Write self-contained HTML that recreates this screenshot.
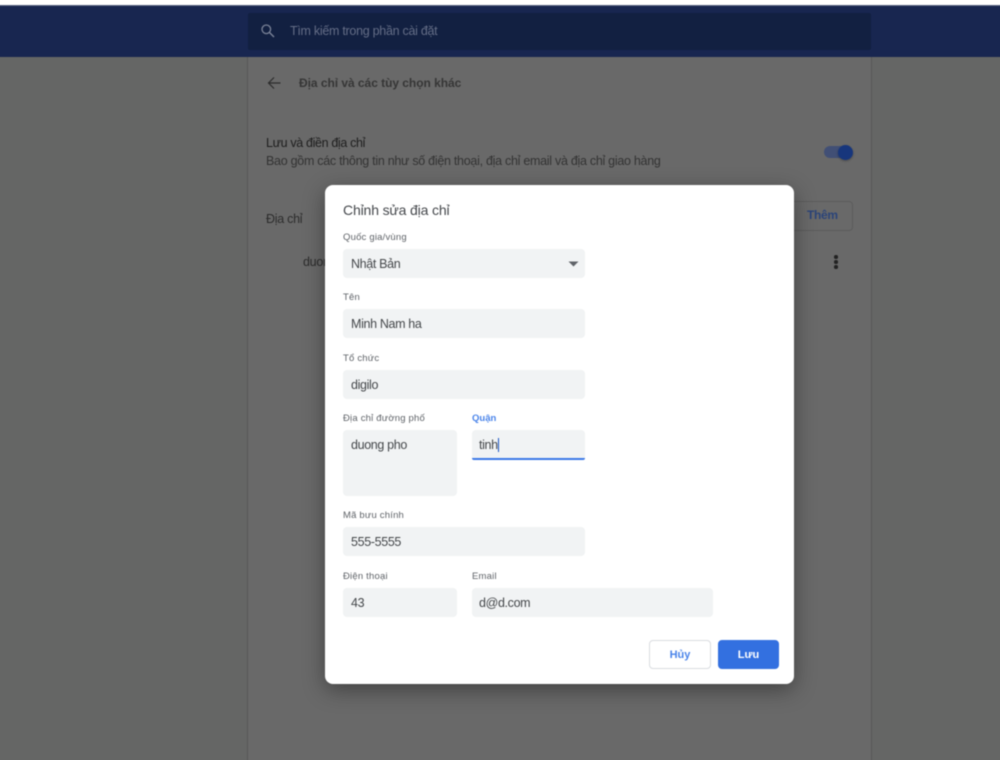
<!DOCTYPE html>
<html lang="vi">
<head>
<meta charset="utf-8">
<title>Chỉnh sửa địa chỉ</title>
<style>
html,body{margin:0;padding:0;width:1000px;height:760px;overflow:hidden;background:#fff;}
*{box-sizing:border-box;}
body{font-family:"Liberation Sans","Noto Sans CJK SC",sans-serif;position:relative;}
#wrap{position:absolute;left:0;top:0;width:1000px;height:760px;filter:blur(0.45px);}
.a{position:absolute;white-space:nowrap;}
.bg{background:#656665;left:-20px;top:57px;width:1040px;height:730px;}
.col{left:247px;top:57px;width:625px;height:730px;background:#696969;border-left:1px solid #565656;border-right:1px solid #565656;}
.hdr{left:-20px;top:5px;width:1040px;height:52px;background:#182650;border-top:1px solid #5a6480;}
.search{left:248px;top:13px;width:623px;height:37px;background:#122041;border-radius:2px;}
.t{font-size:12.5px;line-height:16px;letter-spacing:-.28px;}
.dlg{left:325px;top:185px;width:469px;height:499px;background:#fff;border-radius:8px;box-shadow:0 6px 22px rgba(0,0,0,.38);}
.lb{font-size:9.5px;line-height:12px;color:#5f6368;font-weight:400;letter-spacing:.2px;margin-top:1px;}
.f{background:#f1f3f4;border-radius:4px;height:29px;font-size:12.5px;color:#44474a;line-height:30px;padding-left:8px;letter-spacing:-.35px;}
.btn{height:29px;border-radius:4px;font-size:11px;font-weight:700;line-height:29px;text-align:center;}
</style>
</head>
<body>
<div id="wrap">
  <div class="a bg"></div>
  <div class="a col"></div>
  <div class="a hdr"></div>
  <div class="a search"></div>
  <svg class="a" style="left:260px;top:23px" width="16" height="16" viewBox="0 0 16 16"><circle cx="6.3" cy="6.3" r="4.3" fill="none" stroke="#7a8297" stroke-width="1.3"/><path d="M9.5 9.5L14 14" stroke="#7a8297" stroke-width="1.4" fill="none"/></svg>
  <div class="a t" style="left:290px;top:23px;color:#646d86;">Tìm kiếm trong phần cài đặt</div>

  <svg class="a" style="left:267px;top:76px" width="14" height="14" viewBox="0 0 14 14"><path d="M13.5 7H1.5M7 1.5L1.5 7L7 12.5" fill="none" stroke="#2c2c2c" stroke-width="1.2"/></svg>
  <div class="a" style="left:299px;top:75px;font-size:12px;line-height:16px;font-weight:700;color:#363636;letter-spacing:-.04px;">Địa chỉ và các tùy chọn khác</div>

  <div class="a t" style="left:266px;top:135px;color:#1e1e1e;letter-spacing:-.35px;">Lưu và điền địa chỉ</div>
  <div class="a t" style="left:266px;top:153px;color:#333;">Bao gồm các thông tin như số điện thoại, địa chỉ email và địa chỉ giao hàng</div>

  <div class="a" style="left:824px;top:146px;width:26px;height:12px;border-radius:6px;background:#414f75;"></div>
  <div class="a" style="left:838px;top:145px;width:15px;height:15px;border-radius:50%;background:#17367c;box-shadow:0 1px 2px rgba(0,0,0,.3);"></div>

  <div class="a t" style="left:266px;top:211px;color:#2c2c2c;">Địa chỉ</div>
  <div class="a t" style="left:303px;top:254px;color:#2c2c2c;">duong pho</div>

  <div class="a" style="left:780px;top:201px;width:73px;height:30px;border:1px solid #5c5c5c;border-radius:4px;"></div>
  <div class="a" style="left:807px;top:207px;font-size:12px;line-height:16px;font-weight:700;color:#2b4479;letter-spacing:-.3px;">Thêm</div>

  <div class="a" style="left:834.25px;top:255.25px;width:3.5px;height:3.5px;border-radius:50%;background:#222;"></div>
  <div class="a" style="left:834.25px;top:260.25px;width:3.5px;height:3.5px;border-radius:50%;background:#222;"></div>
  <div class="a" style="left:834.25px;top:265.25px;width:3.5px;height:3.5px;border-radius:50%;background:#222;"></div>

  <div class="a dlg"></div>
  <div class="a" style="left:343px;top:201px;font-size:14px;line-height:18px;color:#45484c;letter-spacing:-.15px;">Chỉnh sửa địa chỉ</div>

  <div class="a lb" style="left:343px;top:231px;">Quốc gia/vùng</div>
  <div class="a f" style="left:343px;top:249px;width:242px;">Nhật Bản</div>
  <svg class="a" style="left:568px;top:261px" width="11" height="6" viewBox="0 0 11 6"><path d="M0.5 0.5H10.5L5.5 5.5Z" fill="#5f6368"/></svg>

  <div class="a lb" style="left:343px;top:291px;">Tên</div>
  <div class="a f" style="left:343px;top:309px;width:242px;">Minh Nam ha</div>

  <div class="a lb" style="left:343px;top:352px;">Tổ chức</div>
  <div class="a f" style="left:343px;top:370px;width:242px;">digilo</div>

  <div class="a lb" style="left:343px;top:412px;">Địa chỉ đường phố</div>
  <div class="a f" style="left:343px;top:430px;width:114px;height:66px;">duong pho</div>

  <div class="a lb" style="left:472px;top:412px;color:#4a84ea;font-weight:700;letter-spacing:0;">Quận</div>
  <div class="a f" style="left:472px;top:430px;width:113px;height:30px;border-bottom:2px solid #3b78e7;border-radius:4px 4px 2px 2px;padding-left:7px;">tinh<span style="display:inline-block;width:1px;height:14px;background:#1a56c4;vertical-align:-3px;"></span></div>

  <div class="a lb" style="left:343px;top:509px;">Mã bưu chính</div>
  <div class="a f" style="left:343px;top:527px;width:242px;">555-5555</div>

  <div class="a lb" style="left:343px;top:570px;">Điện thoại</div>
  <div class="a f" style="left:343px;top:588px;width:114px;">43</div>

  <div class="a lb" style="left:472px;top:570px;">Email</div>
  <div class="a f" style="left:472px;top:588px;width:241px;padding-left:7px;">d@d.com</div>

  <div class="a btn" style="left:649px;top:640px;width:62px;background:#fff;border:1px solid #dadce0;color:#4a84ea;">Hủy</div>
  <div class="a btn" style="left:718px;top:640px;width:61px;background:#3370e0;border:1px solid #3370e0;color:#fff;">Lưu</div>
</div>
</body>
</html>
